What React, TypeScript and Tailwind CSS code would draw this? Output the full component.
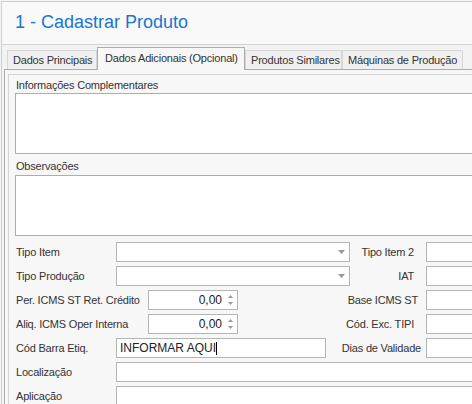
import React from 'react';

const font = { fontFamily: '"Liberation Sans", Arial, sans-serif' };

function SelectArrow() {
  return (
    <svg width="7" height="4" viewBox="0 0 7 4" className="shrink-0">
      <path d="M0 0 L7 0 L3.5 4 Z" fill="#9a9a9a" />
    </svg>
  );
}

function SpinArrows() {
  return (
    <svg width="5" height="12" viewBox="0 0 5 12" className="shrink-0">
      <path d="M0 4 L5 4 L2.5 1 Z" fill="#9a9a9a" />
      <path d="M0 8 L5 8 L2.5 11 Z" fill="#9a9a9a" />
    </svg>
  );
}

function Tab({ label, width, active }: { label: string; width: string; active?: boolean }) {
  if (active) {
    return (
      <div
        className={`${width} h-[23px] -mb-px relative z-10 bg-[#f7f7f7] border border-b-0 border-[#acacac] pl-[7px] pt-[3px] text-[#333] whitespace-nowrap`}
      >
        {label}
      </div>
    );
  }
  return (
    <div
      className={`${width} h-[19px] bg-[#f0f0f0] border border-b-0 border-[#d6d6d6] pl-[5px] pt-[2px] text-[#333] whitespace-nowrap`}
    >
      {label}
    </div>
  );
}

function RightField({ label, pr }: { label: string; pr: string }) {
  return (
    <>
      <div className={`flex-1 text-right ${pr} text-[#333] whitespace-nowrap`}>{label}</div>
      <div className="w-[80px] h-[20px] shrink-0 bg-white border border-[#b4b4b4]" />
    </>
  );
}

export default function App() {
  return (
    <div className="w-[472px] h-[404px] overflow-hidden bg-[#f3f3f3] text-[11px] tracking-[-0.2px] leading-[14px]" style={font}>
      <div className="ml-px mt-px w-[620px] h-[420px] border-l border-t border-[#cfcfcf] flex flex-col">
        {/* Header */}
        <div className="h-[43px] shrink-0 bg-[#f9f9f9] border-b border-[#d2d2d2] pl-[13px] pt-[9px]">
          <span className="text-[18px] leading-[22px] tracking-normal text-[#1877cc]">1 - Cadastrar Produto</span>
        </div>

        {/* Tabs */}
        <div className="pl-[2px] pt-[1px] flex-1 flex flex-col">
          <div className="flex items-end h-[23px] pl-[3px]">
            <Tab label="Dados Principais" width="w-[90px]" />
            <Tab label="Dados Adicionais (Opcional)" width="w-[148px]" active />
            <Tab label="Produtos Similares" width="w-[97px]" />
            <Tab label="Máquinas de Produção" width="w-[121px]" />
          </div>

          <div className="flex-1 border-l border-t border-[#acacac] bg-[#f7f7f7] pl-[3px] pt-[4px]">
            <div className="h-full border-l border-t border-[#d4d4d4] pl-[6px] pt-[3px]">
              <div className="text-[#333] pl-px">Informações Complementares</div>
              <div className="mt-[1px] h-[61px] bg-white border border-[#adadad]" />
              <div className="mt-[5px] text-[#333] pl-px">Observações</div>
              <div className="mt-[2px] h-[61px] bg-white border border-[#adadad]" />

              <div className="mt-[6px] flex flex-col gap-[4px] pl-px">
                {/* Tipo Item */}
                <div className="flex items-center h-[20px] w-[490px]">
                  <div className="w-[100px] text-[#333]">Tipo Item</div>
                  <div className="w-[234px] h-[20px] bg-white border border-[#b4b4b4] flex items-center justify-end pr-[4px]">
                    <SelectArrow />
                  </div>
                  <RightField label="Tipo Item 2" pr="pr-[12px]" />
                </div>

                {/* Tipo Produção */}
                <div className="flex items-center h-[20px] w-[490px]">
                  <div className="w-[100px] text-[#333]">Tipo Produção</div>
                  <div className="w-[234px] h-[20px] bg-white border border-[#b4b4b4] flex items-center justify-end pr-[4px]">
                    <SelectArrow />
                  </div>
                  <RightField label="IAT" pr="pr-[12px]" />
                </div>

                {/* Per. ICMS */}
                <div className="flex items-center h-[20px] w-[490px]">
                  <div className="w-[132px] text-[#333] whitespace-nowrap">Per. ICMS ST Ret. Crédito</div>
                  <div className="w-[90px] h-[20px] bg-white border border-[#b4b4b4] flex items-center justify-end pr-[4px] gap-[6px]">
                    <span className="text-[12px] tracking-normal text-[#222]">0,00</span>
                    <SpinArrows />
                  </div>
                  <RightField label="Base ICMS ST" pr="pr-[8px]" />
                </div>

                {/* Aliq. ICMS */}
                <div className="flex items-center h-[20px] w-[490px]">
                  <div className="w-[132px] text-[#333] whitespace-nowrap">Aliq. ICMS Oper Interna</div>
                  <div className="w-[90px] h-[20px] bg-white border border-[#b4b4b4] flex items-center justify-end pr-[4px] gap-[6px]">
                    <span className="text-[12px] tracking-normal text-[#222]">0,00</span>
                    <SpinArrows />
                  </div>
                  <RightField label="Cód. Exc. TIPI" pr="pr-[12px]" />
                </div>

                {/* Cód Barra */}
                <div className="flex items-center h-[20px] w-[490px]">
                  <div className="w-[100px] text-[#333]">Cód Barra Etiq.</div>
                  <div className="w-[210px] h-[20px] bg-white border border-[#b4b4b4] flex items-center pl-[3px]">
                    <span className="text-[12px] tracking-normal text-[#222]">INFORMAR AQUI</span>
                    <span className="w-px h-[13px] bg-black" />
                  </div>
                  <RightField label="Dias de Validade" pr="pr-[5px]" />
                </div>

                {/* Localização */}
                <div className="flex items-center h-[20px] w-[490px]">
                  <div className="w-[100px] text-[#333]">Localização</div>
                  <div className="flex-1 h-[20px] bg-white border border-[#b4b4b4]" />
                </div>

                {/* Aplicação */}
                <div className="flex items-center h-[20px] w-[490px]">
                  <div className="w-[100px] text-[#333]">Aplicação</div>
                  <div className="flex-1 h-[20px] bg-white border border-[#b4b4b4]" />
                </div>
              </div>
            </div>
          </div>
        </div>
      </div>
    </div>
  );
}
